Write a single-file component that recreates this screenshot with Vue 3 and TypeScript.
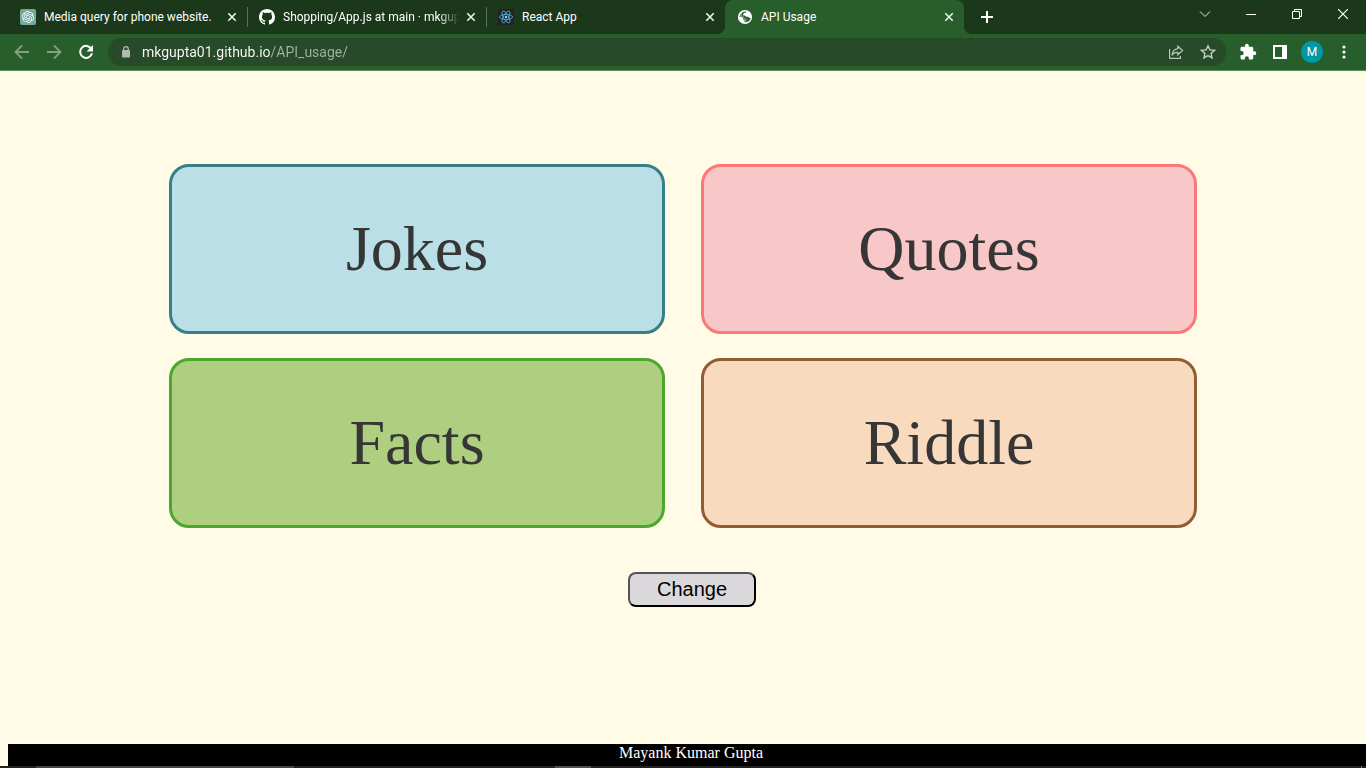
<script setup lang="ts">
import { ref } from 'vue'

type Icon = 'openai' | 'github' | 'react' | 'globe'

interface Tab {
  title: string
  icon: Icon
  long?: boolean
}

interface Card {
  label: string
  tone: string
}

const tabs: Tab[] = [
  { title: 'Media query for phone website.', icon: 'openai' },
  { title: 'Shopping/App.js at main · mkgup', icon: 'github', long: true },
  { title: 'React App', icon: 'react' },
  { title: 'API Usage', icon: 'globe' },
]
const active = ref(3)
const address = ref('mkgupta01.github.io/API_usage/')

const cards: Card[] = [
  { label: 'Jokes', tone: 'blue' },
  { label: 'Quotes', tone: 'pink' },
  { label: 'Facts', tone: 'green' },
  { label: 'Riddle', tone: 'peach' },
]
</script>

<template>
  <div class="window">
    <header class="chrome">
      <div class="strip">
        <nav class="tabs" aria-label="Tabs">
          <div v-for="(tab, i) in tabs" :key="tab.title" class="tab" :class="{ active: i === active, ruled: i + 1 < active }">
            <button class="pick" type="button" @click="active = i">
              <svg v-if="tab.icon === 'openai'" width="16" height="16" viewBox="0 0 32 32" aria-hidden="true">
                <rect width="32" height="32" rx="4" fill="#74a99c" />
                <path transform="translate(4 4)" fill="#fff" d="M22.2819 9.8211a5.9847 5.9847 0 0 0-.5157-4.9108 6.0462 6.0462 0 0 0-6.5098-2.9A6.0651 6.0651 0 0 0 4.9807 4.1818a5.9847 5.9847 0 0 0-3.9977 2.9 6.0462 6.0462 0 0 0 .7427 7.0966 5.98 5.98 0 0 0 .511 4.9107 6.051 6.051 0 0 0 6.5146 2.9001A5.9847 5.9847 0 0 0 13.2599 24a6.0557 6.0557 0 0 0 5.7718-4.2058 5.9894 5.9894 0 0 0 3.9977-2.9001 6.0557 6.0557 0 0 0-.7475-7.0729zm-9.022 12.6081a4.4755 4.4755 0 0 1-2.8764-1.0408l.1419-.0804 4.7783-2.7582a.7948.7948 0 0 0 .3927-.6813v-6.7369l2.02 1.1686a.071.071 0 0 1 .038.052v5.5826a4.504 4.504 0 0 1-4.4945 4.4944zm-9.6607-4.1254a4.4708 4.4708 0 0 1-.5346-3.0137l.142.0852 4.783 2.7582a.7712.7712 0 0 0 .7806 0l5.8428-3.3685v2.3324a.0804.0804 0 0 1-.0332.0615L9.74 19.9502a4.4992 4.4992 0 0 1-6.1408-1.6464zM2.3408 7.8956a4.485 4.485 0 0 1 2.3655-1.9728V11.6a.7664.7664 0 0 0 .3879.6765l5.8144 3.3543-2.0201 1.1685a.0757.0757 0 0 1-.071 0l-4.8303-2.7865A4.504 4.504 0 0 1 2.3408 7.872zm16.5963 3.8558L13.1038 8.364 15.1192 7.2a.0757.0757 0 0 1 .071 0l4.8303 2.7913a4.4944 4.4944 0 0 1-.6765 8.1042v-5.6772a.79.79 0 0 0-.407-.667zm2.0107-3.0231l-.142-.0852-4.7735-2.7818a.7759.7759 0 0 0-.7854 0L9.409 9.2297V6.8974a.0662.0662 0 0 1 .0284-.0615l4.8303-2.7866a4.4992 4.4992 0 0 1 6.6802 4.66zM8.3065 12.863l-2.02-1.1638a.0804.0804 0 0 1-.038-.0567V6.0742a4.4992 4.4992 0 0 1 7.3757-3.4537l-.142.0805L8.704 5.459a.7948.7948 0 0 0-.3927.6813zm1.0976-2.3654l2.602-1.4998 2.6069 1.4998v2.9994l-2.5974 1.4997-2.6067-1.4997Z" />
              </svg>
              <svg v-else-if="tab.icon === 'github'" width="16" height="16" viewBox="0 0 16 16" aria-hidden="true">
                <path fill="#fff" d="M8 0C3.58 0 0 3.58 0 8c0 3.54 2.29 6.53 5.47 7.59.4.07.55-.17.55-.38 0-.19-.01-.82-.01-1.49-2.01.37-2.53-.49-2.69-.94-.09-.23-.48-.94-.82-1.13-.28-.15-.68-.52-.01-.53.63-.01 1.08.58 1.23.82.72 1.21 1.87.87 2.33.66.07-.52.28-.87.51-1.07-1.78-.2-3.64-.89-3.64-3.95 0-.87.31-1.59.82-2.15-.08-.2-.36-1.02.08-2.12 0 0 .67-.21 2.2.82.64-.18 1.32-.27 2-.27s1.36.09 2 .27c1.53-1.04 2.2-.82 2.2-.82.44 1.1.16 1.92.08 2.12.51.56.82 1.27.82 2.15 0 3.07-1.87 3.75-3.65 3.95.29.25.54.73.54 1.48 0 1.07-.01 1.93-.01 2.2 0 .21.15.46.55.38A8.01 8.01 0 0 0 16 8c0-4.42-3.58-8-8-8z" />
              </svg>
              <svg v-else-if="tab.icon === 'react'" width="16" height="16" viewBox="0 0 16 16" aria-hidden="true">
                <rect width="16" height="16" rx="1" fill="#22222c" />
                <g fill="none" stroke="#55b5d0" stroke-width="0.8">
                  <ellipse cx="8" cy="8" rx="6.6" ry="2.6" />
                  <ellipse cx="8" cy="8" rx="6.6" ry="2.6" transform="rotate(60 8 8)" />
                  <ellipse cx="8" cy="8" rx="6.6" ry="2.6" transform="rotate(120 8 8)" />
                </g>
                <circle cx="8" cy="8" r="1.3" fill="#61dafb" />
              </svg>
              <svg v-else width="16" height="16" viewBox="0 0 16 16" aria-hidden="true">
                <circle cx="8" cy="8" r="7.1" fill="#fff" />
                <path fill="#285e2b" d="M9.600 2.600 8.800 3.800H7.200L6.200 5v1.400h1.600l1.200 1.400h2l1.400 1.200h1.400c-.3 1.400-1 2.500-2 3.300L10.600 13 7.400 13.400V11.600L6 10.800V9.300L4.700 8H2.600c.1-2.400 1.700-4.500 4-5.200z" />
                <path fill="#fff" d="M2.400 5.400 4.600 3.400 6.200 3 5 4.600V6.600L6.600 7.600 7.400 9.200 9.600 9.400 9.800 11 8.600 12.600 12.400 12 10.600 14 7 14.600 4.400 13z" fill-opacity="0.35" />
              </svg>
              <span class="title" :class="{ fade: tab.long }">{{ tab.title }}</span>
            </button>
            <button class="close" type="button" :aria-label="'Close ' + tab.title">
              <svg width="16" height="16" viewBox="0 0 16 16" aria-hidden="true">
                <path d="M4.3 4.3l7.4 7.4M11.7 4.3l-7.4 7.4" stroke="#f0f4f0" stroke-width="1.6" />
              </svg>
            </button>
          </div>
        </nav>
        <button class="new" type="button" aria-label="New tab">
          <svg width="16" height="16" viewBox="0 0 16 16" aria-hidden="true">
            <path d="M8 2v12M2 8h12" stroke="#fff" stroke-width="2" />
          </svg>
        </button>
        <div class="controls">
          <button type="button" aria-label="Search tabs">
            <svg width="12" height="12" viewBox="0 0 12 12"><path d="M1 3.5l5 5 5-5" fill="none" stroke="#dfe6df" /></svg>
          </button>
          <button type="button" aria-label="Minimize">
            <svg width="10" height="10" viewBox="0 0 10 10"><path d="M0 5.5h10" stroke="#fff" /></svg>
          </button>
          <button type="button" aria-label="Restore">
            <svg width="10" height="10" viewBox="0 0 10 10"><path d="M.5 2.5h7v7h-7zM2.5 2.5v-2h7v7h-2" fill="none" stroke="#fff" /></svg>
          </button>
          <button type="button" aria-label="Close window">
            <svg width="10" height="10" viewBox="0 0 10 10"><path d="M0 0l10 10M10 0L0 10" stroke="#fff" stroke-width="1.2" /></svg>
          </button>
        </div>
      </div>

      <div class="toolbar">
        <div class="group">
          <button type="button" aria-label="Back">
            <svg width="16" height="16" viewBox="0 0 16 16"><path d="M15 8H2M8 1.5L1.5 8 8 14.5" fill="none" stroke="#82a183" stroke-width="1.8" /></svg>
          </button>
          <button type="button" aria-label="Forward">
            <svg width="16" height="16" viewBox="0 0 16 16"><path d="M1 8h13M8 1.5L14.5 8 8 14.5" fill="none" stroke="#82a183" stroke-width="1.8" /></svg>
          </button>
          <button type="button" aria-label="Reload">
            <svg width="16" height="16" viewBox="0 0 16 16">
              <path d="M13.2 4.6A6 6 0 1 0 14 9.3" fill="none" stroke="#fff" stroke-width="2" />
              <path d="M15 1v6.5H8.5z" fill="#fff" />
            </svg>
          </button>
        </div>
        <div class="omnibox">
          <svg class="lock" width="16" height="16" viewBox="0 0 16 16" aria-hidden="true">
            <rect x="4" y="6" width="8" height="7.5" rx="1" fill="#b3bab5" />
            <path d="M5.8 6.5V4.8a2.2 2.2 0 0 1 4.4 0v1.7" fill="none" stroke="#b3bab5" stroke-width="1.3" />
          </svg>
          <input v-model="address" class="address" type="text" aria-label="Address" spellcheck="false" />
          <button type="button" aria-label="Share">
            <svg width="16" height="16" viewBox="0 0 16 16" fill="none" stroke="#b9c5ba" stroke-width="1.2">
              <path d="M1.6 5v9.400h10.800V12" />
              <path d="M9.800 2.200 14.600 6.500 9.800 10.800V8.300C7 8.200 5.200 9.200 4 11.400c.3-3.400 2.200-6.200 5.800-6.700z" />
            </svg>
          </button>
          <button type="button" aria-label="Bookmark">
            <svg width="16" height="16" viewBox="0 0 16 16">
              <path d="M8 1.8l1.900 4.100 4.500.5-3.300 3 .9 4.400L8 11.600l-4 2.200.9-4.400-3.300-3 4.500-.5z" fill="none" stroke="#c3cec3" stroke-width="1.4" />
            </svg>
          </button>
        </div>
        <div class="group">
          <button type="button" aria-label="Extensions">
            <svg width="18" height="18" viewBox="0 0 24 24">
              <path fill="#fff" d="M20.500 11H19V7c0-1.100-.9-2-2-2h-4V3.500a2.500 2.500 0 0 0-5 0V5H4c-1.100 0-2 .9-2 2v3.800h1.500a2.700 2.700 0 0 1 0 5.400H2V20c0 1.100.9 2 2 2h3.800v-1.500a2.700 2.700 0 0 1 5.400 0V22H17c1.100 0 2-.9 2-2v-4h1.500a2.500 2.500 0 0 0 0-5z" />
            </svg>
          </button>
          <button type="button" aria-label="Side panel">
            <svg width="14" height="14" viewBox="0 0 14 14">
              <path d="M1 1h12v12H1z" fill="none" stroke="#fff" stroke-width="2" /><path d="M9 0h5v14H9z" fill="#fff" />
            </svg>
          </button>
          <button type="button" aria-label="Profile"><span class="avatar">M</span></button>
          <button type="button" aria-label="Menu">
            <svg width="16" height="16" viewBox="0 0 16 16" fill="#fff"><circle cx="8" cy="3" r="1.6" /><circle cx="8" cy="8" r="1.6" /><circle cx="8" cy="13" r="1.6" /></svg>
          </button>
        </div>
      </div>
    </header>

    <main class="page">
      <div class="cards">
        <button v-for="card in cards" :key="card.label" class="card" :class="card.tone" type="button">{{ card.label }}</button>
      </div>
      <button class="change" type="button">Change</button>
    </main>

    <footer class="credit">Mayank Kumar Gupta</footer>
    <div class="taskbar" aria-hidden="true">
      <span class="search"></span>
      <span class="task"></span>
      <span class="peek"></span>
    </div>
  </div>
</template>

<style>
body {
  margin: 0;
  background: #fffbe7;
}
</style>

<style scoped>
.window {
  display: flex;
  flex-direction: column;
  min-height: 100vh;
  font-family: "Liberation Serif", "Times New Roman", serif;
}
button {
  margin: 0;
  padding: 0;
  border: 0;
  background: none;
  color: inherit;
  font: inherit;
}
.chrome {
  font: 12px/16px Roboto, "Noto Sans", sans-serif;
  color: #fff;
  background: #285e2b;
  border-bottom: 1px solid #658b66;
}
.strip {
  display: flex;
  height: 34px;
  padding-left: 8px;
  background: #1b381b;
}
.tabs {
  display: flex;
  flex: 0 1 956px;
  min-width: 0;
}
.tab {
  position: relative;
  display: flex;
  align-items: center;
  flex: 1 1 0;
  min-width: 0;
  box-sizing: border-box;
  padding: 0 7px 0 12px;
}
.ruled::after {
  content: "";
  position: absolute;
  right: -1px;
  top: 7px;
  width: 1px;
  height: 20px;
  background: #54745a;
}
.active {
  background: #285e2b;
  border-radius: 8px 8px 0 0;
}
.active::before,
.active::after {
  content: "";
  position: absolute;
  bottom: 0;
  width: 8px;
  height: 8px;
}
.active::before {
  right: 100%;
  background: radial-gradient(circle at 0 0, transparent 8px, #285e2b 8px);
}
.active::after {
  left: 100%;
  background: radial-gradient(circle at 100% 0, transparent 8px, #285e2b 8px);
}
.pick {
  display: flex;
  align-items: center;
  gap: 8px;
  flex: 1;
  min-width: 0;
  height: 100%;
  text-align: left;
}
.pick svg {
  flex: none;
}
.title {
  flex: 1;
  overflow: hidden;
  white-space: nowrap;
}
.fade {
  mask-image: linear-gradient(90deg, #000 calc(100% - 20px), transparent);
}
.close {
  display: flex;
  margin-left: 4px;
}
.new {
  display: flex;
  align-items: center;
  margin-left: 15px;
}
.controls {
  display: flex;
  margin-left: auto;
  height: 28px;
}
.controls button {
  display: flex;
  align-items: center;
  justify-content: center;
  width: 46px;
}
.toolbar {
  display: flex;
  align-items: center;
  gap: 6px;
  height: 36px;
  padding: 0 6px;
}
.group {
  display: flex;
}
.group button,
.omnibox button {
  display: flex;
  align-items: center;
  justify-content: center;
  width: 32px;
  height: 28px;
}
.omnibox {
  display: flex;
  align-items: center;
  flex: 1;
  min-width: 0;
  height: 28px;
  padding: 0 2px 0 10px;
  border-radius: 14px;
  background: #274a29;
}
.lock {
  flex: none;
}
.address {
  flex: 1;
  min-width: 0;
  height: 20px;
  margin: 0 0 0 8px;
  padding: 0;
  border: 0;
  outline: 0;
  font: 14px/20px Roboto, "Noto Sans", sans-serif;
  color: #fff;
  background: linear-gradient(90deg, #fff 128px, #a2b2a3 128px);
  background-clip: text;
  -webkit-text-fill-color: transparent;
}
.avatar {
  width: 22px;
  border-radius: 11px;
  background: #0097a7;
  font: 12px/22px Roboto, sans-serif;
  text-align: center;
}
.page {
  display: flex;
  flex-direction: column;
  align-items: center;
  flex: 1;
  padding: 93px 24px 24px;
}
.cards {
  display: grid;
  grid-template-columns: 1fr 1fr;
  gap: 24px 36px;
  width: 100%;
  max-width: 1028px;
}
.card {
  min-width: 0;
  padding: 45px 0;
  border: 3px solid;
  border-radius: 20px;
  color: #363636;
  font-size: 64px;
  line-height: 74px;
}
.blue {
  background: #badfe7;
  border-color: #388087;
}
.pink {
  background: #f7c8c7;
  border-color: #fa7978;
}
.green {
  background: #aecf7f;
  border-color: #4ba82e;
}
.peach {
  background: #f8dabf;
  border-color: #925d35;
}
.change {
  width: 128px;
  margin: 44px 0 0 18px;
  padding: 4px 0;
  border: 2px outset #000;
  border-radius: 8px;
  background: #dad8da;
  color: #000;
  font: 20px/23px "Liberation Sans", Arial, sans-serif;
}
.credit {
  margin-left: 8px;
  padding: 0 0 4px 8px;
  background: #000;
  color: #fff;
  font-size: 16px;
  line-height: 18px;
  text-align: center;
}
.taskbar {
  display: flex;
  height: 2px;
  background: #222;
}
.search {
  width: 258px;
  margin-left: 36px;
  background: #444;
}
.task {
  width: 36px;
  margin-left: 261px;
  background: #505050;
}
.peek {
  width: 1px;
  margin: 0 4px 0 auto;
  background: #777;
}
</style>
